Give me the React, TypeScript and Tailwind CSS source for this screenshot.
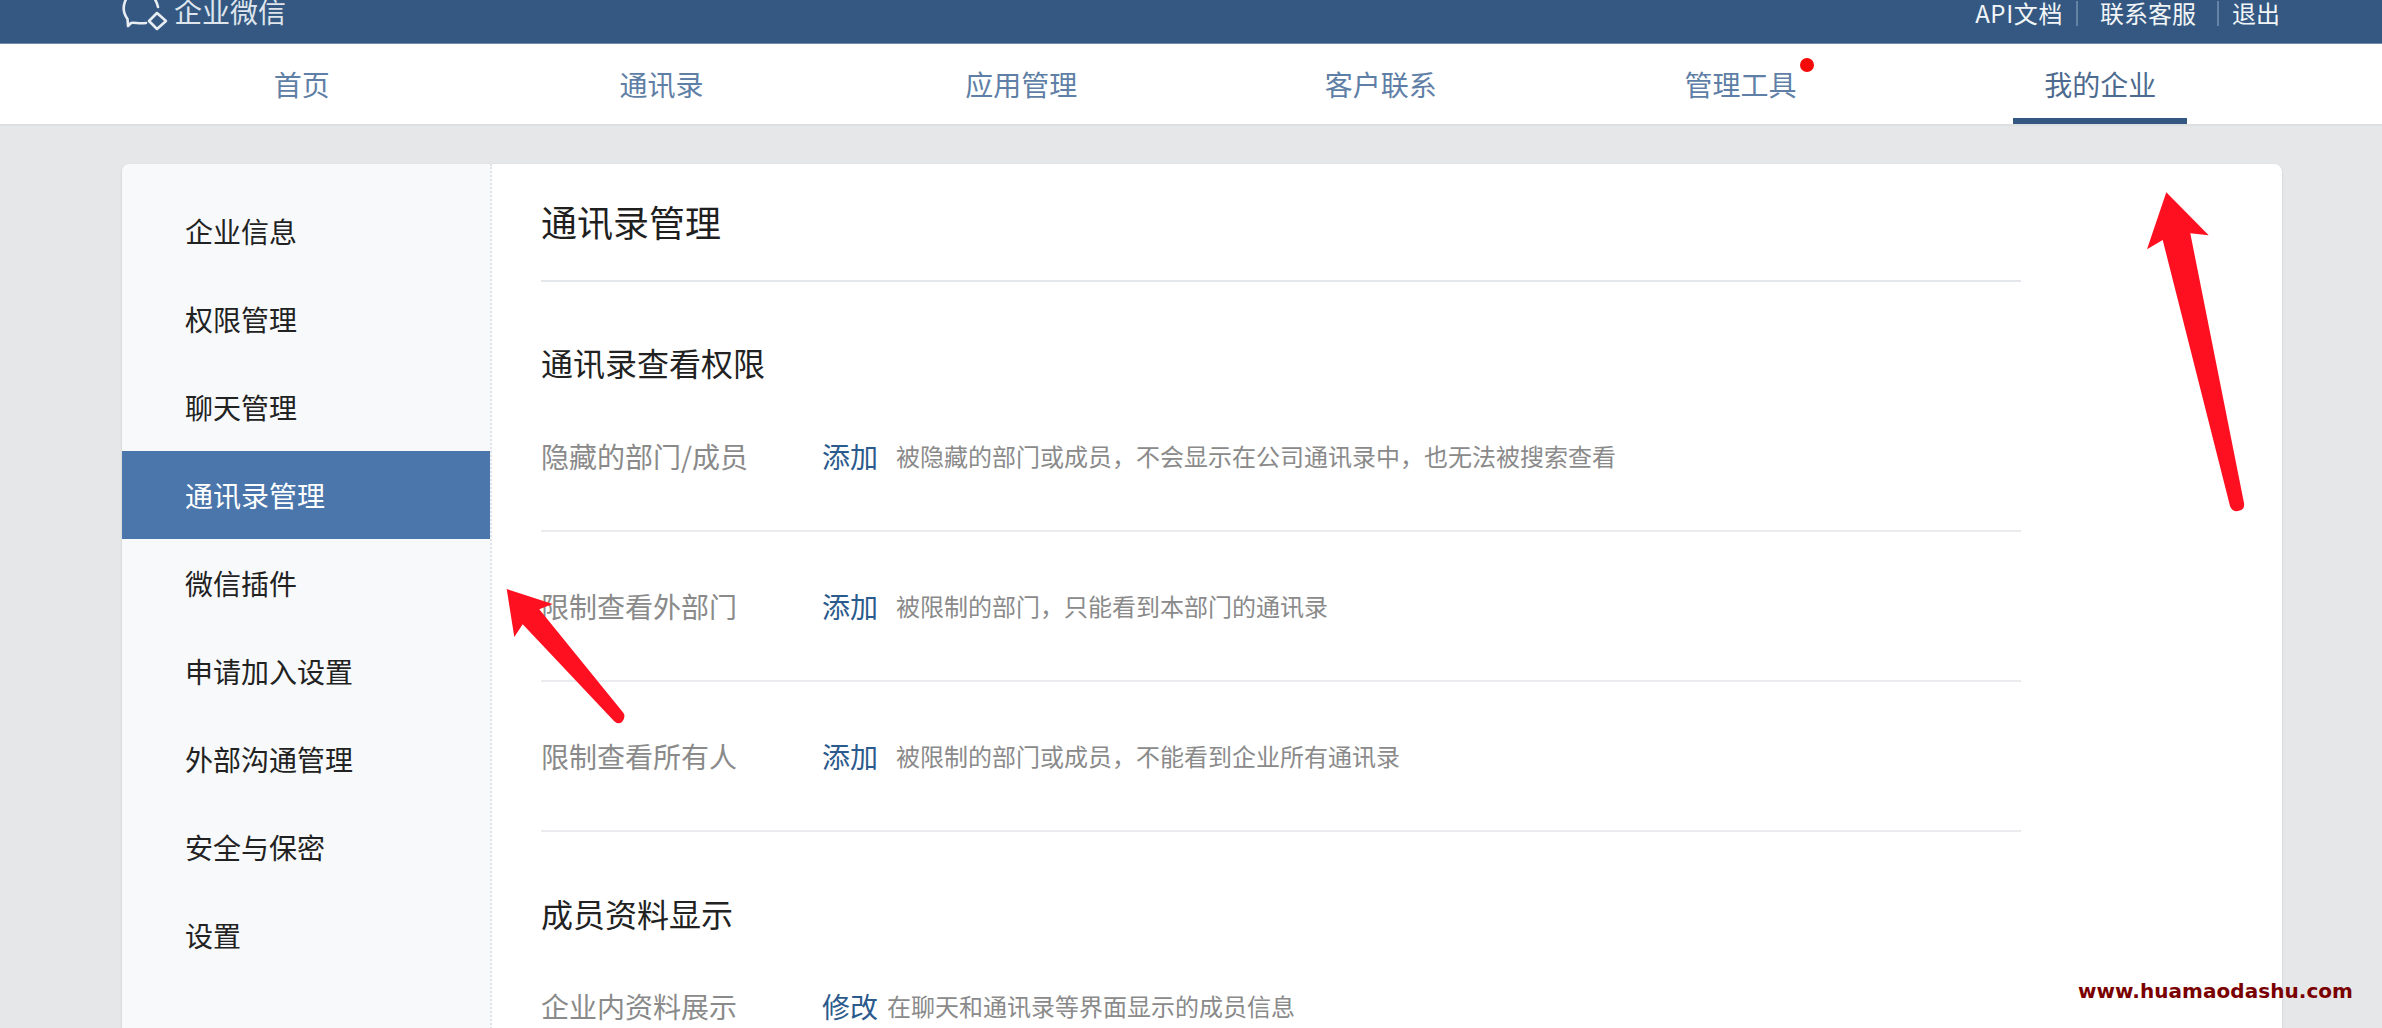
const font = { fontFamily: '"Noto Sans CJK SC", "Liberation Sans", sans-serif' };

const tabs = ['首页', '通讯录', '应用管理', '客户联系', '管理工具', '我的企业'];
const menu = ['企业信息', '权限管理', '聊天管理', '通讯录管理', '微信插件', '申请加入设置', '外部沟通管理', '安全与保密', '设置'];

const Row = ({ label, action, desc, gap = 'ml-[18px]', last = false }: { label: string; action: string; desc: string; gap?: string; last?: boolean }) => (
  <div className={`flex items-center ${last ? 'h-[148px]' : 'h-[150px] border-b-2 border-[#e9ebef]'}`}>
    <span className="w-[281px] text-[28px] text-[#8a8a8a]">{label}</span>
    <span className="text-[28px] text-[#2b5a8c]">{action}</span>
    <span className={`${gap} text-[24px] text-[#8a8a8a]`}>{desc}</span>
  </div>
);

const Logo = () => (
  <svg width="50" height="32" viewBox="0 0 50 32" fill="none" stroke="#e8edf3" strokeWidth="2.6" strokeLinecap="round" strokeLinejoin="round" className="absolute left-[122px] top-0">
    <path d="M24 23 C16 24 13 22 9 23 L6 26 L5.5 19 C-2 9 2 -8 18 -8 C28 -8 34 -2 36 7" />
    <path d="M35 13 L44 21 L35 29 L27 21 Z" />
  </svg>
);

const Arrows = () => (
  <>
    <svg width="110" height="330" viewBox="0 0 110 330" className="absolute left-[2140px] top-[188px]">
      <path d="M26.3 4.3 L68.7 47.3 L50.3 45.3 L104 315 Q105 322 98 323 Q92 324 90 318 L22.7 52 L7 61.3 Z" fill="#ff1020" />
    </svg>
    <svg width="130" height="145" viewBox="0 0 130 145" className="absolute left-[500px] top-[584px]">
      <path d="M6.7 5 L52.7 20 L39.3 25.3 L123.5 129 Q126 133 122 138 Q118 141 114 137 L22.7 40.3 L14.3 53 Z" fill="#ff1020" />
    </svg>
  </>
);

export default function App() {
  return (
    <div className="relative h-[1028px] overflow-hidden bg-[#e6e7e9]" style={font}>
      <header className="relative h-[44px] overflow-hidden bg-[#345881] border-b border-[#6f8cab] text-[#f2f5f8]">
        <Logo />
        <span className="absolute left-[174px] -top-[9px] text-[28px] leading-[40px] text-[#dfe5ec]">企业微信</span>
        <div className="flex justify-end items-center h-[26px] pr-[102px] text-[24px] leading-[26px]">
          <span className="tracking-[0.6px]">API文档</span>
          <span className="ml-[13px] mr-[22px] w-[2px] h-[25px] bg-[#6483a5]" />
          <span>联系客服</span>
          <span className="ml-[21px] mr-[13px] w-[2px] h-[25px] bg-[#6483a5]" />
          <span>退出</span>
        </div>
      </header>

      <nav className="bg-white h-[82px] border-b-2 border-[#dedfe1]">
        <div className="grid grid-cols-6 ml-[122px] mr-[102px]">
          {tabs.map((tab, i) => (
            <div key={tab} className="flex justify-center">
              <div className={`relative flex items-center justify-center h-[80px] w-[174px] border-y-[6px] border-t-transparent text-[28px] ${i === 5 ? 'border-b-[#345881] text-[#4d6a8f]' : 'border-b-transparent text-[#5f7fa6]'}`}>
                {tab}
                {i === 4 && <span className="absolute left-[147px] top-[8px] w-[14px] h-[14px] rounded-full bg-[#f50a0a]" />}
              </div>
            </div>
          ))}
        </div>
      </nav>

      <main className="flex ml-[122px] mr-[100px] mt-[38px] h-[900px] bg-white rounded-lg shadow-sm overflow-hidden">
        <aside className="w-[370px] shrink-0 pt-[23px] bg-[#f8f9fb] border-r-2 border-dotted border-[#dfe2e8]">
          {menu.map((item, i) => (
            <div key={item} className={`flex items-center h-[88px] pl-[63px] text-[28px] ${i === 3 ? 'bg-[#4a76ab] text-white' : 'text-[#222222]'}`}>
              {item}
            </div>
          ))}
        </aside>

        <section className="w-[1529px] pl-[49px]">
          <h1 className="flex items-center h-[118px] pb-[3px] text-[36px] text-[#1f1f1f] border-b-2 border-[#e4e7ec]">通讯录管理</h1>
          <h2 className="mt-[60px] h-[40px] flex items-center text-[32px] text-[#222222]">通讯录查看权限</h2>
          <Row label="隐藏的部门/成员" action="添加" desc="被隐藏的部门或成员，不会显示在公司通讯录中，也无法被搜索查看" />
          <Row label="限制查看外部门" action="添加" desc="被限制的部门，只能看到本部门的通讯录" />
          <Row label="限制查看所有人" action="添加" desc="被限制的部门或成员，不能看到企业所有通讯录" />
          <h2 className="mt-[62px] h-[38px] flex items-center text-[32px] text-[#222222]">成员资料显示</h2>
          <Row label="企业内资料展示" action="修改" desc="在聊天和通讯录等界面显示的成员信息" gap="ml-[9px]" last />
        </section>
      </main>

      <Arrows />
      <span className="absolute left-[2078px] top-[977px] text-[20px] leading-[28px] font-bold tracking-[0.05px] text-[#7a0000]" style={{ fontFamily: '"DejaVu Sans", sans-serif' }}>www.huamaodashu.com</span>
    </div>
  );
}
